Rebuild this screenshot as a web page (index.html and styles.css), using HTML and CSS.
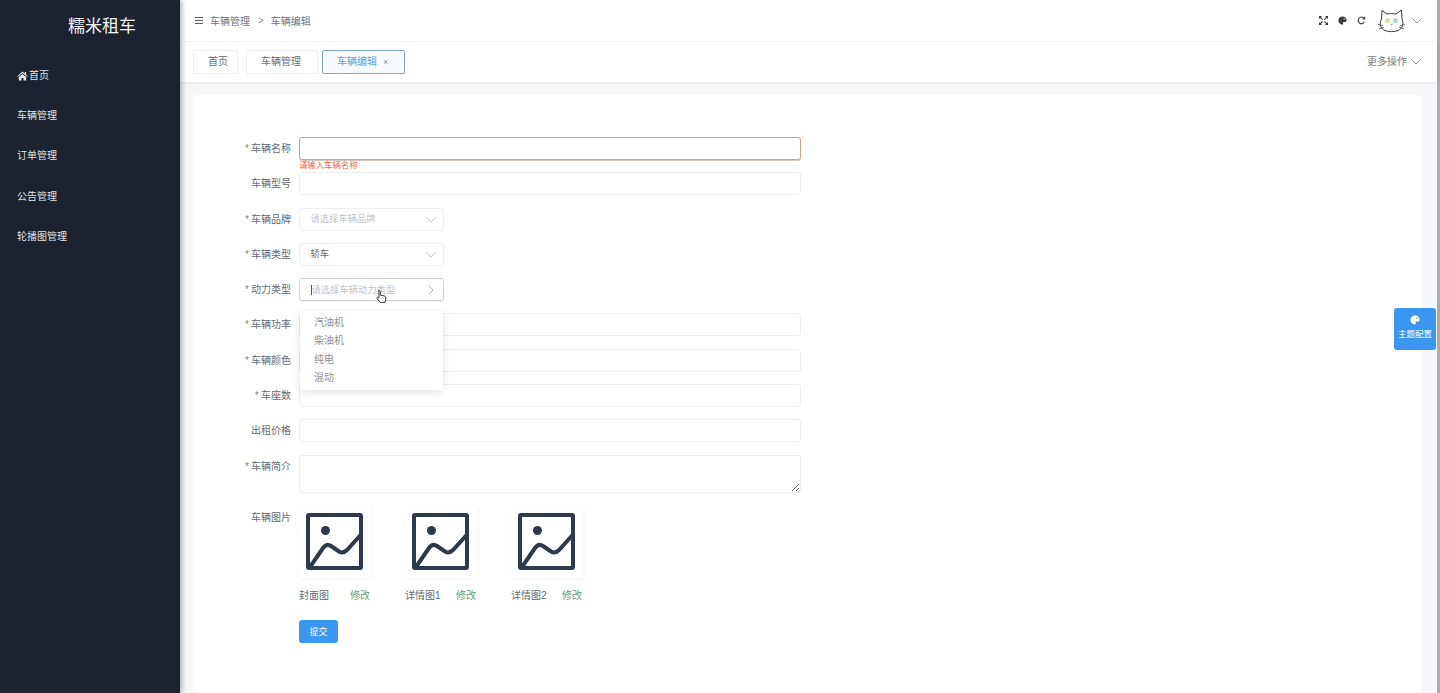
FILE: index.html
```html
<!DOCTYPE html>
<html lang="zh-CN">
<head>
    <meta charset="UTF-8">
    <meta name="viewport" content="width=device-width, initial-scale=1.0">
    <title>糯米租车</title>
    <link rel="stylesheet" href="styles.css">
</head>
<body>
    <aside class="sidebar">
        <div class="logo">糯米租车</div>
        <nav class="menu">
            <a class="menu-item">
                <svg class="home-icon" viewBox="0 0 16 14"><path d="M8 0.500 0.300 7.200l1 1L8 2.600l6.700 5.600 1-1L13.300 5V1.200h-2v2.100zM2.600 8.600V13.500h4v-3.600h2.800v3.600h4V8.600L8 4z" fill="#e6e8eb"/></svg>首页
            </a>
            <a class="menu-item">车辆管理</a>
            <a class="menu-item">订单管理</a>
            <a class="menu-item">公告管理</a>
            <a class="menu-item">轮播图管理</a>
        </nav>
    </aside>

    <div class="main">
        <header class="topbar">
            <div class="breadcrumb">
                <svg class="burger" viewBox="0 0 8 7"><path d="M0 .5h8M0 3.500h8M0 6.500h8" stroke="#5a5e66" stroke-width="1"/></svg>
                <span>车辆管理</span>
                <span class="sep">&gt;</span>
                <span>车辆编辑</span>
            </div>
            <div class="tools">
                <svg class="tool" viewBox="0 0 10 10"><path d="M1 1l3 3M9 1L6 4M1 9l3-3M9 9L6 6" stroke="#3a3e44" stroke-width="1.300"/><path d="M0 0h3.400L0 3.400zM10 0v3.400L6.600 0zM0 10V6.600L3.400 10zM10 10H6.600L10 6.600z" fill="#3a3e44"/></svg>
                <svg class="tool" viewBox="0 0 10 10"><path d="M5 .6C2.300.6.400 2.600.400 5.100s2 4.400 4.400 4.400c1 0 1.200-.7.900-1.300-.4-.8 0-1.600 1-1.600h1.300c1 0 1.600-.7 1.600-1.800C9.600 2.300 7.600.6 5 .6z" fill="#3a3e44"/><circle cx="6.900" cy="3.200" r=".8" fill="#fff"/></svg>
                <svg class="tool" viewBox="0 0 10 10"><path d="M8.300 6.500A3.700 3.700 0 1 1 7.600 2.300" fill="none" stroke="#3a3e44" stroke-width="1.200"/><path d="M5.800 3.600 9.300 3.900 8.900.4z" fill="#3a3e44"/></svg>
                <svg class="avatar" viewBox="0 0 27 24">
                    <path d="M4 1.500 9 5c3-.6 6-.6 9 0L23.500 1l.5 9c2 5 .5 9.500-4 11.500-4 1.500-9 1.500-13 0-4.500-2-6-6.500-3.500-11.500z" fill="#fff" stroke="#3a3a3a" stroke-width="1"/>
                    <circle cx="9.500" cy="11.500" r="2.500" fill="#e4dc9c"/>
                    <circle cx="17.500" cy="11.500" r="2.500" fill="#a8d8cc"/>
                    <path d="M12.500 15l1 .8 1-.8M0 15.500l5 1M1 20l5-2M27 15.500l-5 1M26 20l-5-2" fill="none" stroke="#3a3a3a" stroke-width=".7"/>
                </svg>
                <svg class="chevron" viewBox="0 0 10 6"><path d="M.5.5 5 5 9.500.5" fill="none" stroke="#8a8e96" stroke-width=".9"/></svg>
            </div>
        </header>

        <div class="tabs">
            <a class="tab tab-home">首页</a>
            <a class="tab tab-list">车辆管理</a>
            <a class="tab tab-active">车辆编辑<span class="tab-close">×</span></a>
            <div class="tabs-more">更多操作
                <svg class="chevron" viewBox="0 0 10 6"><path d="M.5.5 5 5 9.500.5" fill="none" stroke="#8a8e96" stroke-width=".9"/></svg>
            </div>
        </div>

        <div class="content">
            <section class="card">
                <form class="form">
                    <div class="row">
                        <label class="required">车辆名称</label>
                        <div class="field">
                            <input class="input input-error" type="text">
                            <div class="error">请输入车辆名称</div>
                        </div>
                    </div>
                    <div class="row">
                        <label>车辆型号</label>
                        <div class="field"><input class="input" type="text"></div>
                    </div>
                    <div class="row">
                        <label class="required">车辆品牌</label>
                        <div class="select placeholder">请选择车辆品牌
                            <svg class="chevron" viewBox="0 0 10 6"><path d="M.5.5 5 5 9.500.5" fill="none" stroke="#c0c4cc" stroke-width=".9"/></svg>
                        </div>
                    </div>
                    <div class="row">
                        <label class="required">车辆类型</label>
                        <div class="select">轿车
                            <svg class="chevron" viewBox="0 0 10 6"><path d="M.5.5 5 5 9.500.5" fill="none" stroke="#c0c4cc" stroke-width=".9"/></svg>
                        </div>
                    </div>
                    <div class="row">
                        <label class="required">动力类型</label>
                        <div class="select select-open placeholder">
                            <span class="caret"></span>请选择车辆动力类型
                            <svg class="arrow" viewBox="0 0 6 10"><path d="M.8.8 5 5 .8 9.200" fill="none" stroke="#a8acb4" stroke-width=".9"/></svg>
                            <svg class="pointer" viewBox="0 0 12 15"><path d="M3.500 1c.7 0 1.200.5 1.200 1.200V6l4.300.9c1.100.3 1.800 1 1.800 2 0 1.500-.5 3-1 5H4.500L1 9.500c-.5-.7.500-1.600 1.300-1l.9.800V2.200C2.300.5 2.800 1 3.500 1z" fill="#fff" stroke="#222" stroke-width="1"/></svg>
                            <ul class="dropdown">
                                <li>汽油机</li>
                                <li>柴油机</li>
                                <li>纯电</li>
                                <li>混动</li>
                            </ul>
                        </div>
                    </div>
                    <div class="row">
                        <label class="required">车辆功率</label>
                        <div class="field"><input class="input" type="text"></div>
                    </div>
                    <div class="row">
                        <label class="required">车辆颜色</label>
                        <div class="field"><input class="input" type="text"></div>
                    </div>
                    <div class="row">
                        <label class="required">车座数</label>
                        <div class="field"><input class="input" type="text"></div>
                    </div>
                    <div class="row">
                        <label>出租价格</label>
                        <div class="field"><input class="input" type="text"></div>
                    </div>
                    <div class="row row-area">
                        <label class="required">车辆简介</label>
                        <div class="field"><textarea class="textarea"></textarea></div>
                    </div>
                    <div class="row row-pics">
                        <label>车辆图片</label>
                        <div class="pics">
                            <div class="pic">
                                <div class="pic-box">
                                    <svg viewBox="0 0 57 57"><rect x="2" y="2" width="53" height="53" rx="1" fill="none" stroke="#2c3a4b" stroke-width="4"/><circle cx="19.500" cy="17.500" r="4.500" fill="#2c3a4b"/><path d="M4 54 17 35Q20.700 30 25 33L33 38.500Q37 41 41 37L55.500 21" fill="none" stroke="#2c3a4b" stroke-width="4"/></svg>
                                </div>
                                <div class="pic-caption"><span>封面图</span><a class="pic-edit">修改</a></div>
                            </div>
                            <div class="pic">
                                <div class="pic-box">
                                    <svg viewBox="0 0 57 57"><rect x="2" y="2" width="53" height="53" rx="1" fill="none" stroke="#2c3a4b" stroke-width="4"/><circle cx="19.500" cy="17.500" r="4.500" fill="#2c3a4b"/><path d="M4 54 17 35Q20.700 30 25 33L33 38.500Q37 41 41 37L55.500 21" fill="none" stroke="#2c3a4b" stroke-width="4"/></svg>
                                </div>
                                <div class="pic-caption"><span>详情图1</span><a class="pic-edit">修改</a></div>
                            </div>
                            <div class="pic">
                                <div class="pic-box">
                                    <svg viewBox="0 0 57 57"><rect x="2" y="2" width="53" height="53" rx="1" fill="none" stroke="#2c3a4b" stroke-width="4"/><circle cx="19.500" cy="17.500" r="4.500" fill="#2c3a4b"/><path d="M4 54 17 35Q20.700 30 25 33L33 38.500Q37 41 41 37L55.500 21" fill="none" stroke="#2c3a4b" stroke-width="4"/></svg>
                                </div>
                                <div class="pic-caption"><span>详情图2</span><a class="pic-edit">修改</a></div>
                            </div>
                        </div>
                    </div>
                    <button class="submit" type="button">提交</button>
                </form>
            </section>
        </div>
    </div>

    <div class="scroll-edge"></div>

    <div class="theme-btn">
        <svg viewBox="0 0 10 10"><path d="M5 .6C2.300.6.400 2.600.400 5.100s2 4.400 4.400 4.400c1 0 1.200-.7.900-1.300-.4-.8 0-1.600 1-1.600h1.300c1 0 1.600-.7 1.600-1.800C9.600 2.300 7.600.6 5 .6z" fill="#fff"/><circle cx="6.900" cy="3.200" r=".8" fill="#3a96f0"/></svg>
        <span>主题配置</span>
    </div>
</body>
</html>
```

FILE: styles.css
```css
* {
    box-sizing: border-box;
}

html, body {
    height: 100%;
}

body {
    margin: 0;
    display: flex;
    overflow: hidden;
    font-family: "Liberation Sans", "Noto Sans CJK SC", sans-serif;
    font-size: 10px;
    color: #5a5e66;
    background: #fff;
}

.sidebar {
    width: 180px;
    flex-shrink: 0;
    background: #1d232e;
    box-shadow: 2px 0 5px rgba(0, 21, 41, 0.3);
    position: relative;
    z-index: 2;
}

.logo {
    height: 53px;
    line-height: 53px;
    padding-left: 68px;
    font-size: 17px;
    color: #f2f3f5;
}

.menu {
    display: flex;
    flex-direction: column;
    margin-top: 3px;
}

.menu-item {
    height: 40.2px;
    line-height: 40px;
    padding-left: 17px;
    display: flex;
    align-items: center;
    color: #dfe2e6;
}

.home-icon {
    width: 11px;
    height: 10px;
    margin-right: 1px;
}

.main {
    flex: 1;
    min-width: 0;
    display: flex;
    flex-direction: column;
}

.topbar {
    height: 42px;
    flex-shrink: 0;
    display: flex;
    align-items: center;
    justify-content: space-between;
    padding: 0 15px 0 15px;
    border-bottom: 1px solid #f6f7f8;
}

.breadcrumb {
    display: flex;
    align-items: center;
    color: #70747c;
}

.burger {
    width: 8px;
    height: 7px;
    margin-right: 7px;
}

.sep {
    margin: 0 7px 0 8px;
    color: #909399;
}

.tools {
    display: flex;
    align-items: center;
}

.tool {
    width: 9px;
    height: 9px;
    margin-right: 10px;
}

.avatar {
    width: 27px;
    height: 24px;
    margin: 0 7px 0 2px;
}

.chevron {
    width: 10px;
    height: 6px;
}

.tabs {
    height: 40px;
    flex-shrink: 0;
    display: flex;
    align-items: flex-start;
    padding: 8px 16px 0 13px;
    box-shadow: 0 1px 3px rgba(0, 21, 41, 0.08);
    position: relative;
}

.tab {
    height: 24px;
    line-height: 22px;
    text-align: center;
    border: 1px solid #eceef1;
    border-radius: 2px;
    color: #6a6e76;
}

.tab-home {
    width: 45px;
    margin-right: 8px;
    padding-left: 5px;
}

.tab-list {
    width: 72px;
    margin-right: 4px;
    padding-right: 2px;
}

.tab-active {
    width: 83px;
    padding-left: 14px;
    text-align: left;
    color: #5aa5e6;
    background: #f7fbfe;
    border-color: #7fa6bd;
}

.tab-close {
    margin-left: 6px;
    font-size: 9px;
    color: #909399;
}

.tabs-more {
    margin-left: auto;
    height: 24px;
    line-height: 22px;
    display: flex;
    align-items: center;
    color: #777b83;
}

.tabs-more .chevron {
    margin-left: 4px;
}

.content {
    flex: 1;
    min-height: 0;
    padding: 13px 15px 0 13px;
    background: #f5f7f9;
}

.card {
    height: 100%;
    background: #fff;
    border-radius: 4px;
    padding: 42px 0 0;
}

.form {
    width: 608px;
}

.row {
    display: flex;
    min-height: 23px;
    margin-bottom: 12.3px;
}

.row label {
    width: 98px;
    height: 23px;
    flex-shrink: 0;
    margin-right: 8px;
    line-height: 24px;
    text-align: right;
    color: #666a72;
}

.required::before {
    content: "*";
    margin-right: 2px;
    color: #9a7c80;
}

.field {
    flex: 1;
    position: relative;
}

.input,
.textarea {
    display: block;
    width: 100%;
    height: 23px;
    border: 1px solid #eceef1;
    border-radius: 3px;
    background: #fff;
    outline: none;
}

.input-error {
    border-color: #dc9c84;
    box-shadow: 0 1px 0 #d8c8bf;
}

.error {
    position: absolute;
    left: 0;
    top: 23px;
    font-size: 8.4px;
    line-height: 11px;
    color: #e0694a;
}

.select {
    width: 145px;
    height: 23px;
    line-height: 22px;
    padding-left: 10.500px;
    border: 1px solid #eceef1;
    border-radius: 3px;
    font-size: 9.300px;
    color: #666a72;
    position: relative;
    display: flex;
    align-items: center;
}

.placeholder {
    color: #c0c4cc;
}

.select .chevron {
    position: absolute;
    right: 7px;
    top: 8px;
}

.select-open {
    border-color: #cdd1d7;
    box-shadow: 0 1px 1px rgba(0, 0, 0, 0.05);
}

.caret {
    width: 1px;
    height: 10px;
    background: #555;
}

.arrow {
    position: absolute;
    right: 9px;
    top: 6px;
    width: 6px;
    height: 10px;
}

.pointer {
    position: absolute;
    left: 76px;
    top: 10px;
    width: 11px;
    height: 15px;
}

.dropdown {
    position: absolute;
    left: 0;
    top: 32px;
    width: 143px;
    height: 79px;
    margin: 0;
    padding: 3px 0 0;
    list-style: none;
    background: #fff;
    font-size: 10px;
    box-shadow: 0 2px 8px rgba(0, 0, 0, 0.12);
    z-index: 3;
}

.dropdown li {
    height: 18.300px;
    line-height: 18px;
    padding-left: 14px;
    color: #8e9198;
}

.row-area {
    margin-bottom: 14px;
}

.textarea {
    height: 38px;
    resize: vertical;
}

.row-pics {
    margin-bottom: 17px;
}

.row-pics label {
    line-height: 22px;
}

.pics {
    display: flex;
    gap: 34px;
}

.pic {
    width: 72px;
}

.pic-box {
    width: 72px;
    height: 71px;
    padding: 6px 8px 0 7px;
    box-shadow: 1px 1px 4px rgba(0, 0, 0, 0.06);
}

.pic-box svg {
    display: block;
    width: 57px;
    height: 57px;
}

.pic-caption {
    display: flex;
    justify-content: space-between;
    margin-top: 11px;
    padding-right: 1px;
    line-height: 14px;
    color: #666a72;
}

.pic-edit {
    color: #6f9a70;
}

.submit {
    display: block;
    width: 39px;
    height: 23px;
    margin-left: 106px;
    padding: 0;
    border: none;
    border-radius: 3px;
    background: #3a96f0;
    color: #fff;
    font-family: inherit;
    font-size: 9px;
}

.scroll-edge {
    width: 3px;
    flex-shrink: 0;
    background: #a9abae;
}

.theme-btn {
    position: fixed;
    left: 1394px;
    top: 308px;
    width: 42px;
    height: 42px;
    padding-top: 7px;
    display: flex;
    flex-direction: column;
    align-items: center;
    gap: 2px;
    border-radius: 3px;
    background: #3a96f0;
    color: #fff;
    font-size: 8.500px;
    z-index: 5;
}

.theme-btn svg {
    width: 10px;
    height: 10px;
}
```
